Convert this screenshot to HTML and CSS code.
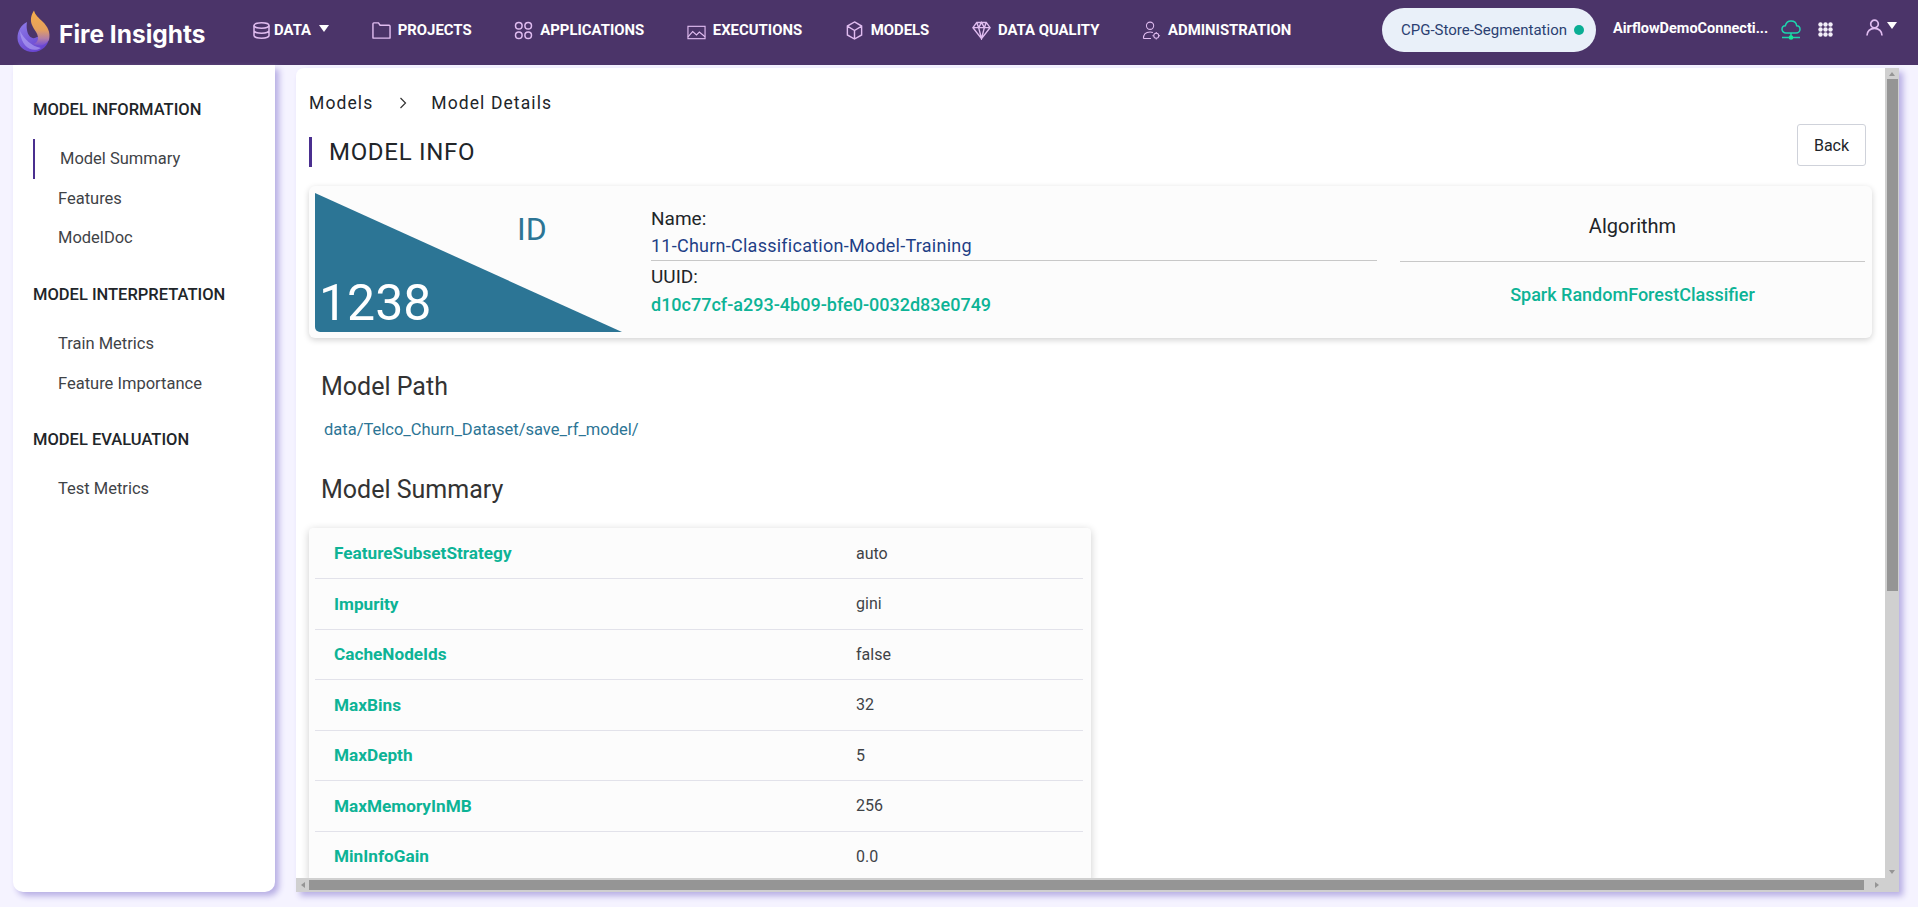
FILE: index.html
```html
<!DOCTYPE html>
<html lang="en">
<head>
    <meta charset="UTF-8">
    <meta name="viewport" content="width=device-width, initial-scale=1.0">
    <title>Fire Insights - Model Details</title>
    <link rel="stylesheet" href="styles.css">
</head>
<body>
    <header class="topbar">
        <div class="logo">
            <svg class="logo-mark" viewBox="0 0 34 44" width="34" height="44">
                <defs>
                    <linearGradient id="flameFill" x1="0" y1="0" x2="0" y2="1">
                        <stop offset="0" stop-color="#f6ad4a"/>
                        <stop offset="0.55" stop-color="#e5a05e"/>
                        <stop offset="0.8" stop-color="#b27ea6"/>
                        <stop offset="1" stop-color="#7650d4"/>
                    </linearGradient>
                    <linearGradient id="ballFill" x1="0" y1="0" x2="0.6" y2="1">
                        <stop offset="0" stop-color="#8f7de8"/>
                        <stop offset="1" stop-color="#6844d0"/>
                    </linearGradient>
                </defs>
                <path d="M10 12C4 15 .5 21 .5 28c0 8 7 14 15.500 14 9 0 16-7 16-15H20c-4 3-9 0-10-7-.5-3-.4-6 0-8z" fill="url(#ballFill)"/>
                <path d="M3 21c4 8 11 15 21 17-8 5-20 0-21-17z" fill="#b7a9f6" opacity="0.6"/>
                <path d="M17 .5c-3 4.500-4 9.500-2 14.500 2 5 6 8 6 13 0 3-2 5.500-5 6 6 2 11 3 16-4 2-8-2-14-6-18-4-4-8-7-9-11.500z" fill="url(#flameFill)"/>
            </svg>
            <span class="logo-text">Fire Insights</span>
        </div>

        <nav class="mainnav">
            <a class="navitem data-item">
                <svg class="navicon" viewBox="0 0 17 17"><ellipse cx="8.500" cy="3.500" rx="7.500" ry="2.700"/><path d="M1 3.500v10c0 1.500 3.400 2.700 7.500 2.700s7.500-1.200 7.500-2.700v-10M1 8.500c0 1.500 3.400 2.700 7.500 2.700s7.500-1.200 7.500-2.700"/></svg>
                <span>DATA</span><span class="caret"></span>
            </a>
            <a class="navitem">
                <svg class="navicon" viewBox="0 0 20 18"><path d="M1 16.500V2c0-.6.400-1 1-1h4.800l1.700 2.500H18c.6 0 1 .4 1 1v12c0 .3-.2.500-.5.500h-17c-.3 0-.5-.2-.5-.5z"/></svg>
                <span>PROJECTS</span>
            </a>
            <a class="navitem">
                <svg class="navicon" viewBox="0 0 19 19"><circle cx="4.800" cy="4.800" r="3.300"/><circle cx="14.200" cy="4.800" r="3.300"/><circle cx="4.800" cy="14.200" r="3.300"/><circle cx="14.200" cy="14.200" r="3.300"/></svg>
                <span>APPLICATIONS</span>
            </a>
            <a class="navitem">
                <svg class="navicon exec-icon" viewBox="0 0 20 15"><rect x="1" y="1" width="18" height="13"/><path d="M1 12l5-5.500 4 3.500 3-3 6 5"/></svg>
                <span>EXECUTIONS</span>
            </a>
            <a class="navitem">
                <svg class="navicon" viewBox="0 0 18 20"><path d="M9 1l7.500 4.300v9.400L9 19l-7.500-4.300V5.300zM1.500 5.300L9 10l7.500-4.700M9 10v9"/></svg>
                <span>MODELS</span>
            </a>
            <a class="navitem">
                <svg class="navicon" viewBox="0 0 20 19"><path d="M5 1h10l4 5.500L10 18 1 6.500zM1 6.500h18M7 6.500L10 18l3-11.500M5 1l2 5.500L10 1l3 5.500L15 1"/></svg>
                <span>DATA QUALITY</span>
            </a>
            <a class="navitem">
                <svg class="navicon thin" viewBox="0 0 19 20"><circle cx="8" cy="5" r="3.800"/><path d="M1 18.500c0-4 2.500-7 7-7 1 0 2 .2 3 .5M1 18.500h8"/><circle cx="14.500" cy="15.500" r="2.600"/><path d="M14.500 11.500v1.400M14.500 18.100v1.400M10.500 15.500h1.400M17.100 15.500h1.400"/></svg>
                <span>ADMINISTRATION</span>
            </a>
        </nav>

        <div class="topright">
            <div class="project-pill"><span>CPG-Store-Segmentation</span><span class="status-dot"></span></div>
            <span class="connection">AirflowDemoConnecti...</span>
            <svg class="cloud" viewBox="0 0 20 20"><path d="M5 13c-2.300 0-4-1.700-4-3.700s1.500-3.400 3.300-3.500C5 3 7.300 1 10 1c3 0 5.300 2 5.700 4.800 1.900.1 3.300 1.500 3.300 3.500s-1.700 3.700-4 3.700zM10 13v4M1 17.500h18"/><circle cx="10" cy="17.500" r="1.600"/></svg>
            <svg class="apps" viewBox="0 0 15 15"><circle cx="2.500" cy="2.500" r="2.200"/><circle cx="7.500" cy="2.500" r="2.200"/><circle cx="12.500" cy="2.500" r="2.200"/><circle cx="2.500" cy="7.500" r="2.200"/><circle cx="7.500" cy="7.500" r="2.200"/><circle cx="12.500" cy="7.500" r="2.200"/><circle cx="2.500" cy="12.500" r="2.200"/><circle cx="7.500" cy="12.500" r="2.200"/><circle cx="12.500" cy="12.500" r="2.200"/></svg>
            <div class="usermenu">
                <svg class="navicon user" viewBox="0 0 17 17"><circle cx="8.500" cy="5" r="3.800"/><path d="M1 16.500c0-4 3-7.200 7.500-7.200s7.500 3.200 7.500 7.200"/></svg>
                <span class="caret"></span>
            </div>
        </div>
    </header>

    <div class="layout">
        <aside class="sidebar">
            <h4 class="side-title">MODEL INFORMATION</h4>
            <ul class="side-list">
                <li class="active">Model Summary</li>
                <li>Features</li>
                <li>ModelDoc</li>
            </ul>
            <h4 class="side-title">MODEL INTERPRETATION</h4>
            <ul class="side-list">
                <li>Train Metrics</li>
                <li>Feature Importance</li>
            </ul>
            <h4 class="side-title">MODEL EVALUATION</h4>
            <ul class="side-list">
                <li>Test Metrics</li>
            </ul>
        </aside>

        <main class="main">
            <div class="content">
                <div class="breadcrumb">
                    <span>Models</span>
                    <svg class="crumb-sep" viewBox="0 0 8 12"><path d="M1.500 1l5 5-5 5"/></svg>
                    <span>Model Details</span>
                </div>
                <div class="title-row">
                    <h2 class="page-title">MODEL INFO</h2>
                    <button class="back-btn" type="button">Back</button>
                </div>

                <section class="info-card">
                    <div class="id-block">
                        <div class="id-triangle"></div>
                        <span class="id-label">ID</span>
                        <span class="id-value">1238</span>
                    </div>
                    <div class="info-names">
                        <div class="info-field first">
                            <div class="field-label">Name:</div>
                            <div class="field-name">11-Churn-Classification-Model-Training</div>
                        </div>
                        <div class="info-field">
                            <div class="field-label">UUID:</div>
                            <div class="field-uuid">d10c77cf-a293-4b09-bfe0-0032d83e0749</div>
                        </div>
                    </div>
                    <div class="info-algo">
                        <div class="algo-title">Algorithm</div>
                        <div class="algo-value">Spark RandomForestClassifier</div>
                    </div>
                </section>

                <h3 class="section-title">Model Path</h3>
                <a class="path-link">data/Telco_Churn_Dataset/save_rf_model/</a>
                <h3 class="section-title summary">Model Summary</h3>

                <div class="summary-card">
                    <table class="summary-table">
                        <tr><th>FeatureSubsetStrategy</th><td>auto</td></tr>
                        <tr><th>Impurity</th><td>gini</td></tr>
                        <tr><th>CacheNodeIds</th><td>false</td></tr>
                        <tr><th>MaxBins</th><td>32</td></tr>
                        <tr><th>MaxDepth</th><td>5</td></tr>
                        <tr><th>MaxMemoryInMB</th><td>256</td></tr>
                        <tr><th>MinInfoGain</th><td>0.0</td></tr>
                    </table>
                </div>
            </div>

            <div class="vbar">
                <span class="arrow up"></span>
                <div class="vthumb"></div>
                <span class="arrow down"></span>
            </div>
            <div class="hbar">
                <span class="arrow left"></span>
                <div class="hthumb"></div>
                <span class="arrow right"></span>
            </div>
            <div class="corner"></div>
        </main>
    </div>
</body>
</html>
```
FILE: styles.css
```css
* {
    box-sizing: border-box;
}

html, body {
    margin: 0;
    height: 907px;
    overflow: hidden;
}

body {
    font-family: Roboto, sans-serif;
    background: #f5f3ff;
    color: #212529;
}

/* top bar */
.topbar {
    display: flex;
    align-items: center;
    height: 65px;
    background: #4b3469;
    color: #fff;
}

.logo {
    display: flex;
    align-items: center;
    width: 253px;
    padding-left: 17px;
    flex: none;
}

.logo-mark {
    flex: none;
    margin-top: -1px;
}

.logo-text {
    font-family: Inter, sans-serif;
    font-weight: 700;
    font-size: 24.500px;
    margin-left: 8px;
    margin-top: 3px;
    white-space: nowrap;
}

.mainnav {
    display: flex;
    align-items: center;
    gap: 42.600px;
    flex: none;
    margin-top: -5px;
}

.navitem {
    display: flex;
    align-items: center;
    font-size: 14.900px;
    font-weight: 700;
    white-space: nowrap;
}

.navicon {
    width: 19px;
    height: 19px;
    margin-right: 7px;
    fill: none;
    stroke: #e0bcf0;
    stroke-width: 1.500;
    flex: none;
}

.navicon.thin {
    stroke-width: 1.100;
}

.data-item .navicon {
    width: 17px;
    height: 17px;
    margin-right: 4px;
}

.exec-icon {
    height: 15px;
    margin-top: 5px;
    stroke-width: 1.200;
}

.caret {
    display: inline-block;
    width: 0;
    height: 0;
    margin-left: 8px;
    margin-top: -4px;
    border-left: 5px solid transparent;
    border-right: 5px solid transparent;
    border-top: 7px solid #fff;
}

.topright {
    display: flex;
    align-items: center;
    position: absolute;
    left: 1382px;
    top: 8px;
}

.project-pill {
    display: flex;
    align-items: center;
    justify-content: space-between;
    width: 214px;
    height: 44px;
    padding: 0 12px 0 19px;
    border-radius: 22px;
    background: #e9f0f9;
    color: #2b3f72;
    font-size: 15px;
    white-space: nowrap;
}

.status-dot {
    width: 10px;
    height: 10px;
    border-radius: 50%;
    background: #0aae94;
}

.connection {
    margin-left: 17px;
    width: 159px;
    font-size: 14.500px;
    font-weight: 700;
    white-space: nowrap;
    margin-top: -3px;
}

.cloud {
    width: 20px;
    height: 20px;
    margin-left: 9px;
    fill: none;
    stroke-width: 1.500;
    flex: none;
}

.cloud path {
    stroke: #1dd5ae;
}

.cloud circle {
    fill: #14ea98;
    stroke: #14ea98;
}

.apps {
    width: 15px;
    height: 15px;
    margin-left: 17px;
    fill: #f2eef8;
    flex: none;
    margin-top: -1px;
}

.usermenu {
    display: flex;
    align-items: center;
    margin-left: 33px;
    margin-top: -6px;
}

.usermenu .navicon {
    width: 17px;
    height: 17px;
    margin-right: 0;
    stroke-width: 1.700;
}

.usermenu .caret {
    margin-left: 4px;
}

/* page body */
.layout {
    display: flex;
    height: 827px;
    padding-left: 13px;
}

.sidebar {
    width: 262px;
    flex: none;
    background: #fff;
    border-radius: 0 0 10px 10px;
    box-shadow: 4px 4px 6px #b7aee4;
    padding: 35px 0 0 20px;
}

.side-title {
    margin: 0;
    height: 20px;
    line-height: 20px;
    font-size: 16.500px;
    font-weight: 500;
    color: #212529;
}

.side-list {
    list-style: none;
    margin: 19px 0 27px;
    padding: 0;
}

.side-list li {
    height: 39.700px;
    line-height: 39.700px;
    font-size: 16.500px;
    color: #3f4347;
    padding-left: 25px;
}

.side-list li.active {
    border-left: 2px solid #4a2f8f;
    padding-left: 25px;
}

.main {
    display: grid;
    grid-template-columns: 1589px 14px;
    grid-template-rows: 810px 14px;
    width: 1603px;
    height: 824px;
    margin: 3px 0 0 21px;
    background: #fff;
    border-radius: 8px 0 0 0;
    box-shadow: 4px 4px 6px #b7aee4;
}

.content {
    overflow: hidden;
    padding: 23px 13px 0 13px;
    border-radius: 8px 0 0 0;
}

.breadcrumb {
    display: flex;
    align-items: center;
    height: 24px;
    font-size: 17.500px;
    letter-spacing: 1.100px;
    color: #212529;
}

.crumb-sep {
    width: 8px;
    height: 12px;
    margin: 0 24px 0 26px;
    fill: none;
    stroke: #333;
    stroke-width: 1.200;
}

.title-row {
    display: flex;
    justify-content: space-between;
    margin-top: 11px;
    height: 60px;
}

.page-title {
    margin: 11px 0 0;
    height: 30px;
    line-height: 30px;
    padding-left: 17px;
    border-left: 3px solid #4a2f8f;
    font-size: 24px;
    font-weight: 400;
    letter-spacing: 0.700px;
}

.back-btn {
    width: 69px;
    height: 42px;
    margin: -2px 6px 0 0;
    background: #fff;
    border: 1px solid #cfd2da;
    border-radius: 3px;
    font-family: Roboto, sans-serif;
    font-size: 16px;
    color: #212529;
}

.info-card {
    display: flex;
    height: 152px;
    background: #fcfcfc;
    border-radius: 6px;
    box-shadow: 0 2px 6px rgba(0, 0, 0, 0.18);
}

.id-block {
    position: relative;
    width: 342px;
    flex: none;
}

.id-triangle {
    position: absolute;
    left: 6px;
    top: 7px;
    width: 307px;
    height: 139px;
    background: #2c7595;
    clip-path: polygon(0 0, 100% 100%, 0 100%);
    border-radius: 0 0 0 5px;
}

.id-label {
    position: absolute;
    left: 208px;
    top: 24px;
    font-size: 32px;
    font-weight: 400;
    color: #2c7595;
}

.id-value {
    position: absolute;
    left: 10px;
    top: 88px;
    font-size: 50px;
    font-weight: 400;
    color: #fff;
}

.info-names {
    width: 726px;
    flex: none;
    padding-top: 21px;
}

.field-label {
    font-size: 19px;
    height: 24px;
    line-height: 24px;
}

.field-name {
    height: 30px;
    line-height: 30px;
    font-size: 18px;
    letter-spacing: 0.250px;
    color: #1f3f86;
    border-bottom: 1px solid #c8c8c8;
}

.field-uuid {
    line-height: 31px;
    font-size: 18px;
    font-weight: 500;
    color: #0db396;
}

.info-field + .info-field {
    padding-top: 4px;
}

.info-algo {
    width: 465px;
    margin-left: 23px;
    flex: none;
    text-align: center;
}

.algo-title {
    height: 76px;
    padding-top: 27px;
    line-height: 26px;
    font-size: 20px;
    border-bottom: 1px solid #c8c8c8;
}

.algo-value {
    margin-top: 21px;
    line-height: 24px;
    font-size: 18px;
    font-weight: 500;
    color: #0db396;
}

.section-title {
    margin: 33px 0 0 12px;
    height: 32px;
    line-height: 32px;
    font-size: 25px;
    font-weight: 400;
    color: #333;
}

.section-title.summary {
    margin-top: 34px;
}

.path-link {
    display: block;
    margin: 17px 0 0 15px;
    line-height: 20px;
    font-size: 16.500px;
    color: #2c7595;
}

.summary-card {
    width: 782px;
    margin-top: 22px;
    padding: 0 8px 0 6px;
    background: #fcfcfc;
    box-shadow: 0 2px 8px rgba(0, 0, 0, 0.2);
    border-radius: 4px;
}

.summary-table {
    width: 100%;
    border-collapse: collapse;
    font-size: 16px;
}

.summary-table th, .summary-table td {
    height: 50.500px;
    border-bottom: 1px solid #e2e2ea;
    text-align: left;
    padding: 0;
}

.summary-table th {
    width: 541px;
    padding-left: 19px;
    font-size: 17.200px;
    font-weight: 700;
    color: #0db396;
}

.summary-table td {
    color: #3f4347;
}

/* scrollbars, drawn as the page had its own */
.vbar {
    display: flex;
    flex-direction: column;
    align-items: center;
    background: #d0d0d0;
}

.vthumb {
    width: 11px;
    height: 512px;
    background: #959595;
    margin-top: 3px;
}

.vbar .arrow.down {
    margin-top: auto;
    margin-bottom: 4px;
}

.vbar .arrow.up {
    margin-top: 4px;
}

.hbar {
    display: flex;
    align-items: center;
    background: #d0d0d0;
    height: 14px;
}

.hthumb {
    width: 1555px;
    height: 10px;
    margin-left: 4px;
    background: #959595;
}

.hbar .arrow.left {
    margin-left: 5px;
}

.hbar .arrow.right {
    margin-left: 11px;
}

.corner {
    background: #d0d0d0;
}

.arrow {
    display: block;
    width: 0;
    height: 0;
    flex: none;
}

.arrow.up {
    border-left: 3.500px solid transparent;
    border-right: 3.500px solid transparent;
    border-bottom: 4px solid #959595;
}

.arrow.down {
    border-left: 3.500px solid transparent;
    border-right: 3.500px solid transparent;
    border-top: 4px solid #959595;
}

.arrow.left {
    border-top: 3.500px solid transparent;
    border-bottom: 3.500px solid transparent;
    border-right: 4px solid #959595;
}

.arrow.right {
    border-top: 3.500px solid transparent;
    border-bottom: 3.500px solid transparent;
    border-left: 4px solid #959595;
}
```
